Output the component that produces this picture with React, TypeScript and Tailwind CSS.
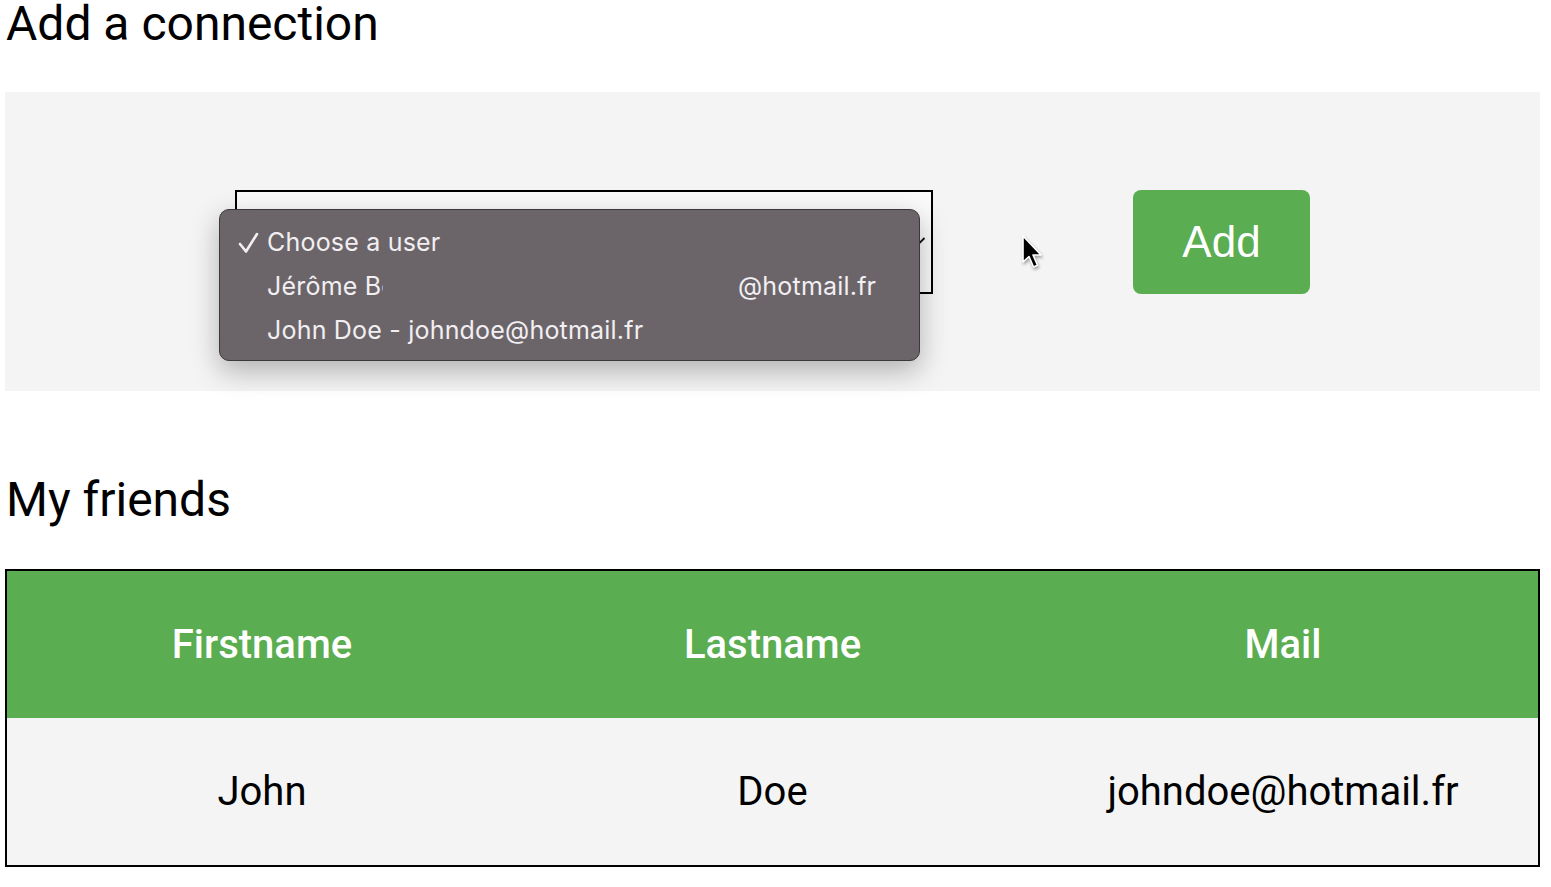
import React from 'react';

const friends = [{ firstname: 'John', lastname: 'Doe', mail: 'johndoe@hotmail.fr' }];

const Pointer = () => (
  <svg
    className="absolute left-[1019px] top-[233px]"
    width="28"
    height="40"
    viewBox="0 0 28 40"
    style={{ filter: 'drop-shadow(1px 2px 1.5px rgba(0,0,0,0.35))' }}
  >
    <path
      d="M4 3 L4 29 L10 23.5 L14.5 34 L18.5 32.3 L14 22 L22 22 Z"
      fill="#000"
      stroke="#fff"
      strokeWidth="1.6"
      strokeLinejoin="round"
    />
  </svg>
);

const Check = () => (
  <svg className="w-[30px] h-[24px]" viewBox="0 0 30 24">
    <path d="M3 13 L9 20.5 L20 3" fill="none" stroke="#f2eff2" strokeWidth="2.6" strokeLinecap="round" strokeLinejoin="round" />
  </svg>
);

const SelectMenu = () => (
  <div className="absolute left-[-18px] top-[17px] w-[701px] h-[152px] rounded-[10px] border border-[#3c383b] bg-[#6b656a] shadow-[0_10px_28px_rgba(0,0,0,0.28)] pt-[11px] text-[25px] tracking-[0.2px] text-[#f2eff2] font-['Inter',sans-serif]">
    <div className="flex items-center h-[44px] pl-[17px]">
      <Check />
      <span>Choose a user</span>
    </div>
    <div className="flex items-center h-[44px] pl-[47px]">
      <span className="w-[116px] overflow-hidden whitespace-nowrap">Jérôme Bo</span>
      <span className="w-[355px]" />
      <span>@hotmail.fr</span>
    </div>
    <div className="flex items-center h-[44px] pl-[47px]">
      <span>John Doe - johndoe@hotmail.fr</span>
    </div>
  </div>
);

export default function App() {
  return (
    <div className="relative w-[1551px] h-[887px] bg-white pl-[5px] font-['Roboto',sans-serif] text-black overflow-hidden">
      <h1 className="text-[48px] leading-none h-[92px] pl-[1px]">Add a connection</h1>

      <div className="w-[1535px] h-[299px] bg-[#f4f4f4] flex items-center">
        <div className="relative ml-[230px] w-[698px] h-[104px] border-2 border-black bg-[#fafafa]">
          <svg className="absolute left-[674px] top-[44px] w-[16px] h-[10px]" viewBox="0 0 16 10">
            <path d="M1.5 2 L7.5 8 L13.5 2" fill="none" stroke="#111" strokeWidth="1.8" />
          </svg>
          <SelectMenu />
        </div>
        <button className="ml-[200px] w-[177px] h-[104px] rounded-[8px] bg-[#5aad50] text-white text-[44px] font-['Liberation_Sans',sans-serif]">
          Add
        </button>
      </div>

      <h2 className="text-[48px] leading-none mt-[85px] h-[93px] pl-[1px]">My friends</h2>

      <table className="w-[1535px] border-2 border-black border-collapse table-fixed">
        <thead>
          <tr className="bg-[#5aad50] h-[148px]">
            <th className="text-white text-[40px] font-medium text-center">Firstname</th>
            <th className="text-white text-[40px] font-medium text-center">Lastname</th>
            <th className="text-white text-[40px] font-medium text-center">Mail</th>
          </tr>
        </thead>
        <tbody>
          {friends.map((f) => (
            <tr key={f.mail} className="bg-[#f4f4f4] h-[148px]">
              <td className="text-[40px] text-center">{f.firstname}</td>
              <td className="text-[40px] text-center">{f.lastname}</td>
              <td className="text-[40px] text-center">{f.mail}</td>
            </tr>
          ))}
        </tbody>
      </table>

      <Pointer />
    </div>
  );
}
